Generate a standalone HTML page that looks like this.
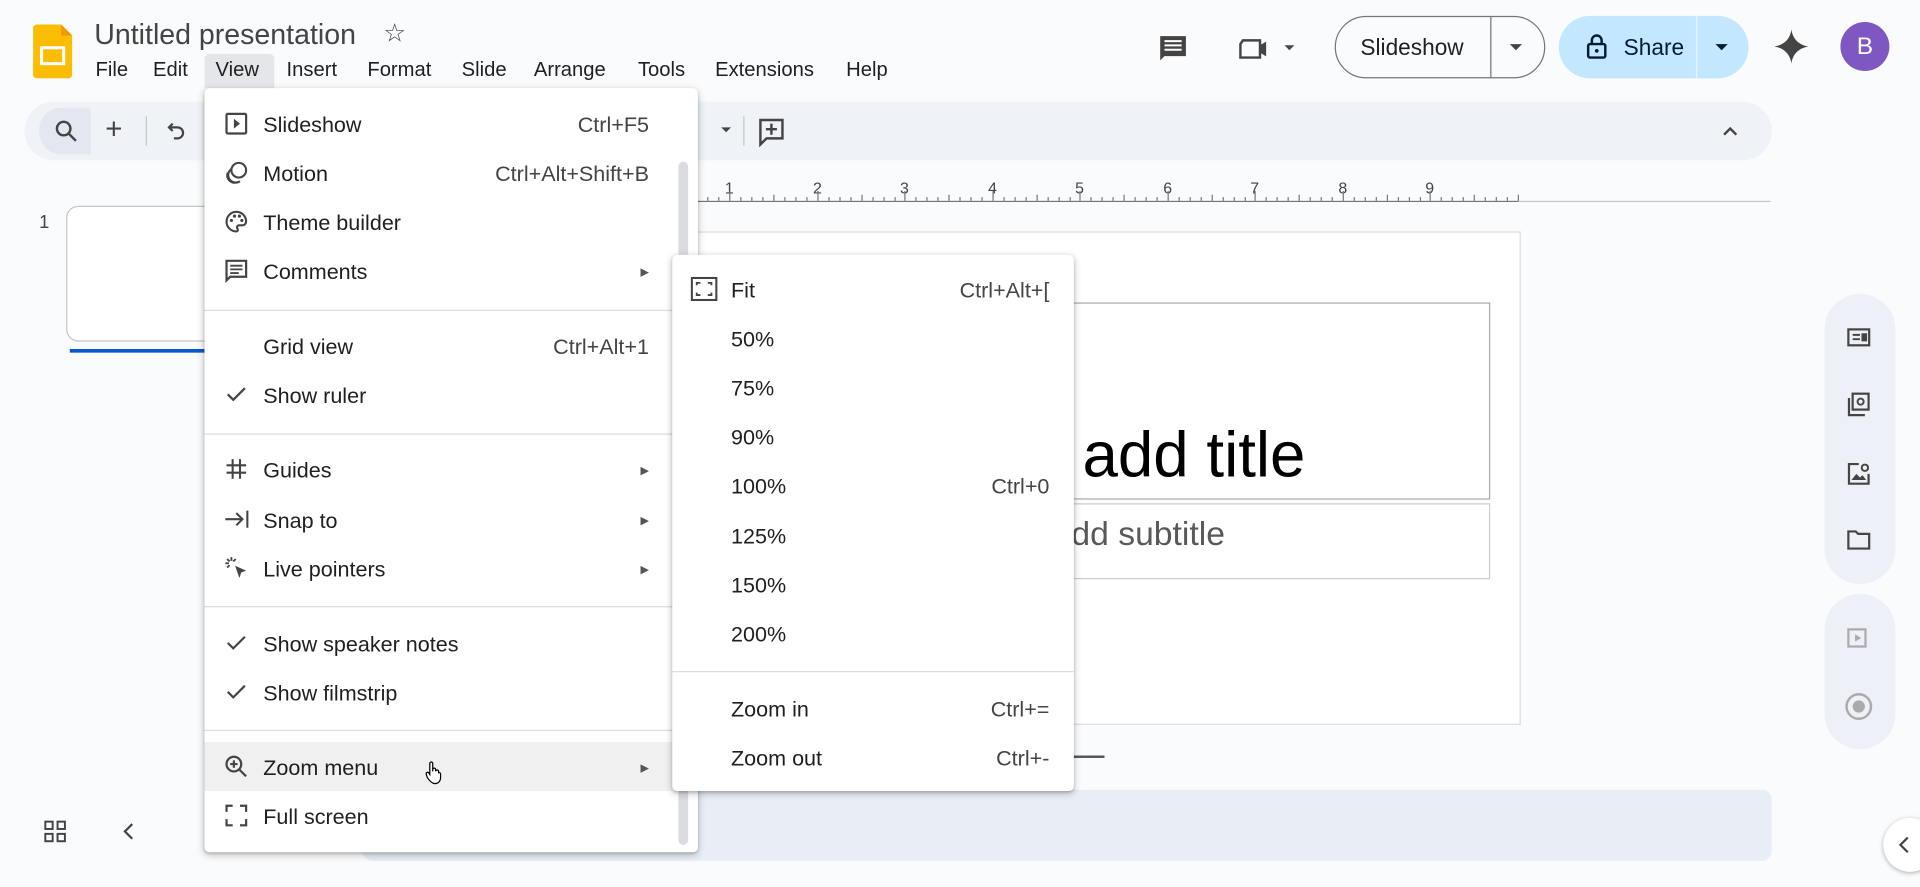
<!DOCTYPE html>
<html><head><meta charset="utf-8"><style>
*{box-sizing:border-box;margin:0;padding:0}
html,body{width:1920px;height:887px;overflow:hidden;background:#f9fbfd}
#w{position:absolute;left:0;top:0;width:1568px;height:724px;transform:scale(1.22449);transform-origin:0 0;font-family:"Liberation Sans",Arial,sans-serif;color:#1f1f1f}
.a{position:absolute}
.menu{background:#fff;border-radius:4px;box-shadow:0 2px 6px rgba(0,0,0,.25),0 1px 2px rgba(0,0,0,.15)}
.it{position:absolute;left:0;right:0;height:40px;font-size:17.6px;line-height:42px}
.it .l{position:absolute;left:48px}
.it .r{position:absolute;right:40px;color:#444}
.it .ar{position:absolute;right:40px;font-size:9px;color:#555}
.it svg{position:absolute;left:16px;top:10px}
.sep{position:absolute;left:0;right:0;height:1px;background:#dadce0}
</style></head><body><div id="w">
<svg class="a" style="left:27px;top:20px" width="32" height="44" viewBox="0 0 32 44"><path d="M3 0h20l9 9v32a3 3 0 0 1-3 3H3a3 3 0 0 1-3-3V3a3 3 0 0 1 3-3z" fill="#fbbc04"/><path d="M23 0l9 9h-9z" fill="#f29900"/><rect x="7" y="19" width="18" height="13" fill="none" stroke="#fff" stroke-width="2.5"/></svg>
<div class="a" style="left:77px;top:15px;font-size:23.3px;color:#444">Untitled presentation</div>
<div class="a" style="left:313px;top:15px;font-size:21px;color:#444">☆</div>
<div class="a" style="left:78px;top:48px;font-size:16.5px">
<span class="a" style="left:0">File</span><span class="a" style="left:47px">Edit</span><span class="a" style="left:156px">Insert</span><span class="a" style="left:222px">Format</span><span class="a" style="left:299px">Slide</span><span class="a" style="left:358px">Arrange</span><span class="a" style="left:443px">Tools</span><span class="a" style="left:506px">Extensions</span><span class="a" style="left:613px">Help</span></div>
<div class="a" style="left:167px;top:44px;width:57px;height:28px;background:#e4e6ea;border-radius:4px 4px 0 0"></div>
<div class="a" style="left:176px;top:48px;font-size:16.5px">View</div>
<svg class="a" style="left:944px;top:26px" width="28" height="28" viewBox="0 0 24 24"><path d="M3 3h18v14H6l-3 3z" fill="#444"/><path d="M6 6.5h12M6 9.5h12M6 12.5h12" stroke="#fff" stroke-width="1.4"/></svg>
<svg class="a" style="left:1011px;top:28px" width="52" height="22" viewBox="0 0 52 22"><path d="M4 5h14v14H2V8z" fill="none" stroke="#444" stroke-width="2"/><path d="M18 9l5-3v12l-5-3z" fill="#444"/><path d="M38 9h8l-4 4z" fill="#444"/></svg>
<div class="a" style="left:1090px;top:13px;width:172px;height:51px;border:1px solid #747775;border-radius:26px"></div>
<div class="a" style="left:1217px;top:13px;width:1px;height:51px;background:#747775"></div>
<div class="a" style="left:1111px;top:28px;font-size:18.5px;color:#1f1f1f">Slideshow</div>
<div class="a" style="left:1233px;top:36px;border:5px solid transparent;border-top-color:#444"></div>
<div class="a" style="left:1273px;top:13px;width:155px;height:51px;background:#c2e7ff;border-radius:26px"></div>
<div class="a" style="left:1385px;top:13px;width:1px;height:51px;background:#e8f4fb"></div>
<svg class="a" style="left:1295px;top:27px" width="18" height="22" viewBox="0 0 18 22"><rect x="2" y="9" width="14" height="11" rx="1.5" fill="none" stroke="#001d35" stroke-width="2"/><path d="M5 9V6a4 4 0 0 1 8 0v3" fill="none" stroke="#001d35" stroke-width="2"/><circle cx="9" cy="14.5" r="1.5" fill="#001d35"/></svg>
<div class="a" style="left:1326px;top:28px;font-size:18.5px;color:#001d35">Share</div>
<div class="a" style="left:1401px;top:36px;border:5px solid transparent;border-top-color:#001d35"></div>
<svg class="a" style="left:1449px;top:24px" width="28" height="28" viewBox="0 0 24 24"><path d="M12 0C12.8 6.5 17 11 24 12 17 13 12.8 17.5 12 24 11.2 17.5 7 13 0 12 7 11 11.2 6.5 12 0z" fill="#444"/></svg>
<div class="a" style="left:1503px;top:18px;width:40px;height:40px;border-radius:50%;background:#7e57c2;color:#fff;font-size:20px;text-align:center;line-height:40px">B</div>
<div class="a" style="left:20px;top:83px;width:1427px;height:48px;background:#eff2f7;border-radius:24px"></div>
<div class="a" style="left:32px;top:88px;width:42px;height:38px;background:#e3e8f0;border-radius:18px 0 0 18px"></div>
<svg class="a" style="left:44px;top:97px" width="20" height="20" viewBox="0 0 20 20"><circle cx="8" cy="8" r="5.5" fill="none" stroke="#444" stroke-width="2"/><path d="M12 12l6 6" stroke="#444" stroke-width="2"/></svg>
<div class="a" style="left:86px;top:92px;font-size:24px;color:#444">+</div>
<div class="a" style="left:119px;top:95px;width:1px;height:24px;background:#c4c7c5"></div>
<svg class="a" style="left:136px;top:99px" width="16" height="18" viewBox="0 0 16 18"><path d="M5 2L2 5l3 3M2 5h7a4.5 4.5 0 0 1 0 9H6" fill="none" stroke="#444" stroke-width="1.8"/></svg>
<div class="a" style="left:589px;top:104px;border:4.5px solid transparent;border-top-color:#444"></div>
<div class="a" style="left:607px;top:95px;width:1px;height:24px;background:#c4c7c5"></div>
<svg class="a" style="left:619px;top:96px" width="22" height="24" viewBox="0 0 22 24"><path d="M2 2h18v15H7l-5 5z" fill="none" stroke="#444" stroke-width="2"/><path d="M11 5v9M6.5 9.5h9" stroke="#444" stroke-width="2"/></svg>
<svg class="a" style="left:1406px;top:102px" width="14" height="10" viewBox="0 0 14 10"><path d="M2 8l5-5 5 5" fill="none" stroke="#444" stroke-width="2"/></svg>
<div class="a" style="left:566px;top:164px;width:880px;height:1px;background:#c4c7c5"></div>
<svg class="a" style="left:560px;top:140px" width="690" height="26"><g font-family="Liberation Sans" font-size="13" fill="#444"><text x="32" y="18">1</text><text x="104" y="18">2</text><text x="175" y="18">3</text><text x="247" y="18">4</text><text x="318" y="18">5</text><text x="390" y="18">6</text><text x="461" y="18">7</text><text x="533" y="18">8</text><text x="604" y="18">9</text></g><path d="M0 24.5H680" stroke="#777"/><g stroke="#777"><path d="M0 24V19 M9 24V21 M18 24V21 M27 24V21 M36 24V16 M45 24V21 M54 24V21 M63 24V21 M72 24V19 M81 24V21 M90 24V21 M99 24V21 M108 24V16 M117 24V21 M126 24V21 M135 24V21 M144 24V19 M153 24V21 M162 24V21 M171 24V21 M179 24V16 M188 24V21 M197 24V21 M206 24V21 M215 24V19 M224 24V21 M233 24V21 M242 24V21 M251 24V16 M260 24V21 M269 24V21 M278 24V21 M287 24V19 M296 24V21 M305 24V21 M314 24V21 M322 24V16 M331 24V21 M340 24V21 M349 24V21 M358 24V19 M367 24V21 M376 24V21 M385 24V21 M394 24V16 M403 24V21 M412 24V21 M421 24V21 M430 24V19 M439 24V21 M448 24V21 M457 24V21 M465 24V16 M474 24V21 M483 24V21 M492 24V21 M501 24V19 M510 24V21 M519 24V21 M528 24V21 M537 24V16 M546 24V21 M555 24V21 M564 24V21 M573 24V19 M582 24V21 M591 24V21 M600 24V21 M608 24V16 M617 24V21 M626 24V21 M635 24V21 M644 24V19 M653 24V21 M662 24V21 M671 24V21 M680 24V19"/></g></svg>
<div class="a" style="left:32px;top:173px;font-size:15px;color:#444">1</div>
<div class="a" style="left:54px;top:168px;width:130px;height:111px;border:1px solid #c4c7c5;border-radius:10px;background:#fff"></div>
<div class="a" style="left:57px;top:285px;width:120px;height:3px;background:#0b57d0"></div>
<svg class="a" style="left:36px;top:670px" width="18" height="18" viewBox="0 0 18 18"><g fill="none" stroke="#444" stroke-width="1.6"><rect x="1" y="1" width="6" height="6"/><rect x="11" y="1" width="6" height="6"/><rect x="1" y="11" width="6" height="6"/><rect x="11" y="11" width="6" height="6"/></g></svg>
<svg class="a" style="left:100px;top:672px" width="10" height="14" viewBox="0 0 10 14"><path d="M8 1L2 7l6 6" fill="none" stroke="#444" stroke-width="1.8"/></svg>
<div class="a" style="left:560px;top:189px;width:682px;height:403px;background:#fff;border:1px solid #dadce0"></div>
<div class="a" style="left:575px;top:247px;width:642px;height:161px;border:1px solid #aaa"></div>
<div class="a" style="left:575px;top:411px;width:642px;height:62px;border:1px solid #ccc"></div>
<div class="a" style="left:884px;top:342px;font-size:52px;color:#000">add title</div>
<div class="a" style="left:875px;top:420px;font-size:27.5px;color:#595959">dd subtitle</div>
<div class="a" style="left:875px;top:617px;width:27px;height:2px;background:#555"></div>
<div class="a" style="left:296px;top:645px;width:1151px;height:58px;background:#e9eef6;border-radius:8px"></div>
<div class="a" style="left:1490px;top:240px;width:58px;height:237px;background:#edf1f7;border-radius:29px"></div>
<div class="a" style="left:1490px;top:485px;width:58px;height:127px;background:#edf1f7;border-radius:29px"></div>
<svg class="a" style="left:1508px;top:266px" width="20" height="20" viewBox="0 0 20 20"><rect x="1.5" y="3" width="17" height="13" fill="none" stroke="#444" stroke-width="1.8"/><path d="M5 7.5h6M5 11h6M13 7h3v5h-3z" stroke="#444" stroke-width="1.6" fill="#444"/></svg>
<svg class="a" style="left:1508px;top:320px" width="20" height="22" viewBox="0 0 20 22"><rect x="5" y="1.5" width="13" height="13" fill="none" stroke="#444" stroke-width="1.8"/><path d="M2 5v14h13" fill="none" stroke="#444" stroke-width="1.8"/><circle cx="11.5" cy="8" r="2.5" fill="none" stroke="#444" stroke-width="1.6"/></svg>
<svg class="a" style="left:1508px;top:377px" width="20" height="20" viewBox="0 0 20 20"><path d="M10 2H2v16h16v-8" fill="none" stroke="#444" stroke-width="1.8"/><path d="M4 15l4-5 3 3 2-2 3 4z" fill="#444"/><circle cx="15" cy="5" r="2.6" fill="none" stroke="#444" stroke-width="1.6"/></svg>
<svg class="a" style="left:1508px;top:432px" width="20" height="18" viewBox="0 0 20 18"><path d="M1.5 2h6l2 2h9v12h-17z" fill="none" stroke="#444" stroke-width="1.8"/></svg>
<svg class="a" style="left:1508px;top:511px" width="20" height="20" viewBox="0 0 20 20"><rect x="1.5" y="3" width="14" height="14" fill="none" stroke="#aaa" stroke-width="1.8"/><path d="M7 7v6l5-3z" fill="#aaa"/></svg>
<div class="a" style="left:1507px;top:566px;width:22px;height:22px;border:2px solid #aaa;border-radius:50%"></div>
<div class="a" style="left:1513px;top:572px;width:10px;height:10px;background:#aaa;border-radius:50%"></div>
<div class="a" style="left:1538px;top:668px;width:44px;height:44px;background:#fff;border-radius:50%;box-shadow:0 1px 4px rgba(0,0,0,.3)"></div>
<svg class="a" style="left:1550px;top:683px" width="10" height="14" viewBox="0 0 10 14"><path d="M8 1L2 7l6 6" fill="none" stroke="#444" stroke-width="1.8"/></svg>

<div class="a menu" style="left:167px;top:72px;width:403px;height:624px">
 <div class="a" style="left:387px;top:60px;width:8px;height:558px;background:#dadce0;border-radius:4px"></div>
 <div class="it" style="top:9px"><svg width="20" height="20" viewBox="0 0 20 20"><rect x="2" y="2" width="16" height="16" rx="1" fill="none" stroke="#444" stroke-width="1.8"/><path d="M8 6v8l5-4z" fill="#444"/></svg><span class="l">Slideshow</span><span class="r">Ctrl+F5</span></div>
 <div class="it" style="top:49px"><svg width="20" height="20" viewBox="0 0 20 20"><g fill="none" stroke="#444" stroke-width="1.7"><ellipse cx="12" cy="8" rx="6" ry="6"/><path d="M6 7a6 6 0 0 0 7 10M3 10a6 6 0 0 0 7 8"/></g></svg><span class="l">Motion</span><span class="r">Ctrl+Alt+Shift+B</span></div>
 <div class="it" style="top:89px"><svg width="20" height="20" viewBox="0 0 20 20"><path d="M10 2a8 8 0 0 0 0 16c1.5 0 1.5-1.5.8-2.5-.7-1 0-2.5 1.5-2.5H15a3 3 0 0 0 3-3c0-4.5-3.6-8-8-8z" fill="none" stroke="#444" stroke-width="1.7"/><circle cx="6" cy="9" r="1.3" fill="#444"/><circle cx="8.5" cy="5.5" r="1.3" fill="#444"/><circle cx="12.5" cy="5.5" r="1.3" fill="#444"/><circle cx="14.5" cy="9" r="1.3" fill="#444"/></svg><span class="l">Theme builder</span></div>
 <div class="it" style="top:129px"><svg width="20" height="20" viewBox="0 0 20 20"><path d="M2 2h16v13H5l-3 3z" fill="none" stroke="#444" stroke-width="1.8"/><path d="M5 6h10M5 9h10M5 12h7" stroke="#444" stroke-width="1.5"/></svg><span class="l">Comments</span><span class="ar">▶</span></div>
 <div class="sep" style="top:181px"></div>
 <div class="it" style="top:190px"><span class="l">Grid view</span><span class="r">Ctrl+Alt+1</span></div>
 <div class="it" style="top:230px"><svg width="20" height="20" viewBox="0 0 20 20"><path d="M3 10l4.5 4.5L17 5" fill="none" stroke="#444" stroke-width="1.8"/></svg><span class="l">Show ruler</span></div>
 <div class="sep" style="top:282px"></div>
 <div class="it" style="top:291px"><svg width="20" height="20" viewBox="0 0 20 20"><path d="M7 2v16M13 2v16M2 7h16M2 13h16" stroke="#444" stroke-width="1.7"/></svg><span class="l">Guides</span><span class="ar">▶</span></div>
 <div class="it" style="top:332px"><svg width="22" height="20" viewBox="0 0 22 20"><path d="M1 10h14M10 5l5 5-5 5M19 3v14" fill="none" stroke="#444" stroke-width="1.7"/></svg><span class="l">Snap to</span><span class="ar">▶</span></div>
 <div class="it" style="top:372px"><svg width="20" height="20" viewBox="0 0 20 20"><path d="M9 8l9 4-4 1.5L12.5 18z" fill="#444"/><path d="M6 1v3M1 6h3M2.5 2.5l2 2M9.5 2.5l-2 2M2.5 9.5l2-2" stroke="#444" stroke-width="1.5"/></svg><span class="l">Live pointers</span><span class="ar">▶</span></div>
 <div class="sep" style="top:423px"></div>
 <div class="it" style="top:433px"><svg width="20" height="20" viewBox="0 0 20 20"><path d="M3 10l4.5 4.5L17 5" fill="none" stroke="#444" stroke-width="1.8"/></svg><span class="l">Show speaker notes</span></div>
 <div class="it" style="top:473px"><svg width="20" height="20" viewBox="0 0 20 20"><path d="M3 10l4.5 4.5L17 5" fill="none" stroke="#444" stroke-width="1.8"/></svg><span class="l">Show filmstrip</span></div>
 <div class="sep" style="top:524px"></div>
 <div class="it" style="top:534px;background:#f0f0f0;right:21px"><svg width="20" height="20" viewBox="0 0 20 20"><circle cx="8" cy="8" r="6" fill="none" stroke="#444" stroke-width="1.8"/><path d="M12.5 12.5L18 18M8 5v6M5 8h6" stroke="#444" stroke-width="1.8"/></svg><span class="l">Zoom menu</span><span class="ar" style="right:19px">▶</span></div>
 <div class="it" style="top:574px"><svg width="20" height="20" viewBox="0 0 20 20"><path d="M2 7V2h5M13 2h5v5M18 13v5h-5M7 18H2v-5" fill="none" stroke="#444" stroke-width="1.8"/></svg><span class="l">Full screen</span></div>
 <svg class="a" style="left:180px;top:549px" width="14" height="20" viewBox="0 0 14 20"><path d="M4 9V2.5a1.2 1.2 0 0 1 2.4 0V9V7.5a1.2 1.2 0 0 1 2.4 0V9a1.2 1.2 0 0 1 2.4 0v1a1.2 1.2 0 0 1 1.6 1v3c0 3-2 5-4.5 5S4 17 2 14l-1-3a1.2 1.2 0 0 1 2-1l1 1.5z" fill="#fff" stroke="#000" stroke-width="1"/></svg>
</div>
<div class="a menu" style="left:549px;top:208px;width:328px;height:438px">
 <div class="it" style="top:8px"><svg width="22" height="20" viewBox="0 0 22 20" style="left:15px"><rect x="1" y="1" width="20" height="18" fill="none" stroke="#444" stroke-width="1.7"/><path d="M5 7V5h3M14 5h3v2M17 13v2h-3M8 15H5v-2" fill="none" stroke="#444" stroke-width="1.5"/></svg><span class="l">Fit</span><span class="r" style="right:20px">Ctrl+Alt+[</span></div>
 <div class="it" style="top:48px"><span class="l">50%</span></div>
 <div class="it" style="top:88px"><span class="l">75%</span></div>
 <div class="it" style="top:128px"><span class="l">90%</span></div>
 <div class="it" style="top:168px"><span class="l">100%</span><span class="r" style="right:20px">Ctrl+0</span></div>
 <div class="it" style="top:209px"><span class="l">125%</span></div>
 <div class="it" style="top:249px"><span class="l">150%</span></div>
 <div class="it" style="top:289px"><span class="l">200%</span></div>
 <div class="sep" style="top:340px"></div>
 <div class="it" style="top:350px"><span class="l">Zoom in</span><span class="r" style="right:20px">Ctrl+=</span></div>
 <div class="it" style="top:390px"><span class="l">Zoom out</span><span class="r" style="right:20px">Ctrl+-</span></div>
</div>
</div></body></html>
